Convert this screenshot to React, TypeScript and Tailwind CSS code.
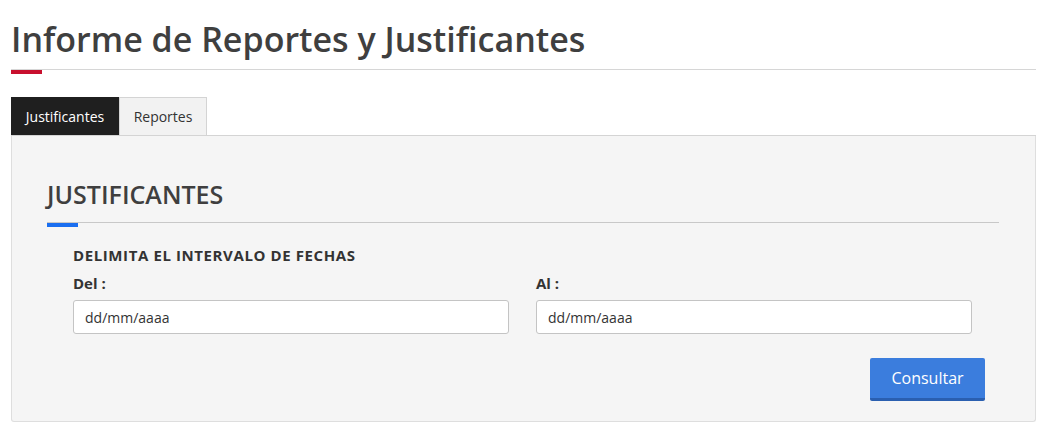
import React from "react";

export default function App() {
  return (
    <div className="min-h-[435px] bg-white px-[11px] pt-[17px] text-[#444]" style={{ fontFamily: '"Open Sans", "Liberation Sans", sans-serif' }}>
      <h1 className="text-[34px] font-semibold leading-[44px] text-[#3f3f3f]">Informe de Reportes y Justificantes</h1>
      <div className="mt-[8px] h-px w-[1025px] bg-[#d6d6d6]" />
      <div className="h-[4px] w-[31px] bg-[#c8102e]" />
      <div className="mt-[23px] flex w-[1025px] border-b border-[#d4d4d4]">
        <div className="flex h-[38px] w-[108px] items-center justify-center bg-[#1f1f1f] text-[14px] text-white">Justificantes</div>
        <div className="flex h-[38px] w-[88px] items-center justify-center border border-b-0 border-[#d4d4d4] bg-[#f2f2f2] text-[14px] text-[#333]">Reportes</div>
      </div>
      <div className="w-[1025px] rounded-b-[3px] border border-t-0 border-[#dedede] bg-[#f5f5f5] px-[35px] pb-[20px] pt-[40px]">
        <h2 className="text-[25px] font-semibold leading-[36px] text-[#3f3f3f]">JUSTIFICANTES</h2>
        <div className="mt-[10px] h-px w-[952px] bg-[#c8c8c8]" />
        <div className="h-[4px] w-[31px] bg-[#1a6ef0]" />
        <div className="px-[26px] pt-[18px]">
          <div className="text-[15px] font-bold leading-[20px] tracking-[0.6px] text-[#333]">DELIMITA EL INTERVALO DE FECHAS</div>
          <div className="mt-[7px] grid w-[899px] grid-cols-2 gap-x-[27px]">
            <div>
              <label className="block text-[15px] font-bold leading-[22px] text-[#333]">Del :</label>
              <div className="mt-[6px] flex h-[34px] items-center rounded-[3px] border border-[#c4c4c4] bg-white px-[11px] text-[14px] text-[#333]">dd/mm/aaaa</div>
            </div>
            <div>
              <label className="block text-[15px] font-bold leading-[22px] text-[#333]">Al :</label>
              <div className="mt-[6px] flex h-[34px] items-center rounded-[3px] border border-[#c4c4c4] bg-white px-[11px] text-[14px] text-[#333]">dd/mm/aaaa</div>
            </div>
          </div>
          <div className="mt-[24px] flex w-[912px] justify-end">
            <button className="h-[43px] w-[115px] rounded-[2px] border-b-[3px] border-[#2a5fb0] bg-[#3b7ddd] text-[16px] text-white">Consultar</button>
          </div>
        </div>
      </div>
    </div>
  );
}
